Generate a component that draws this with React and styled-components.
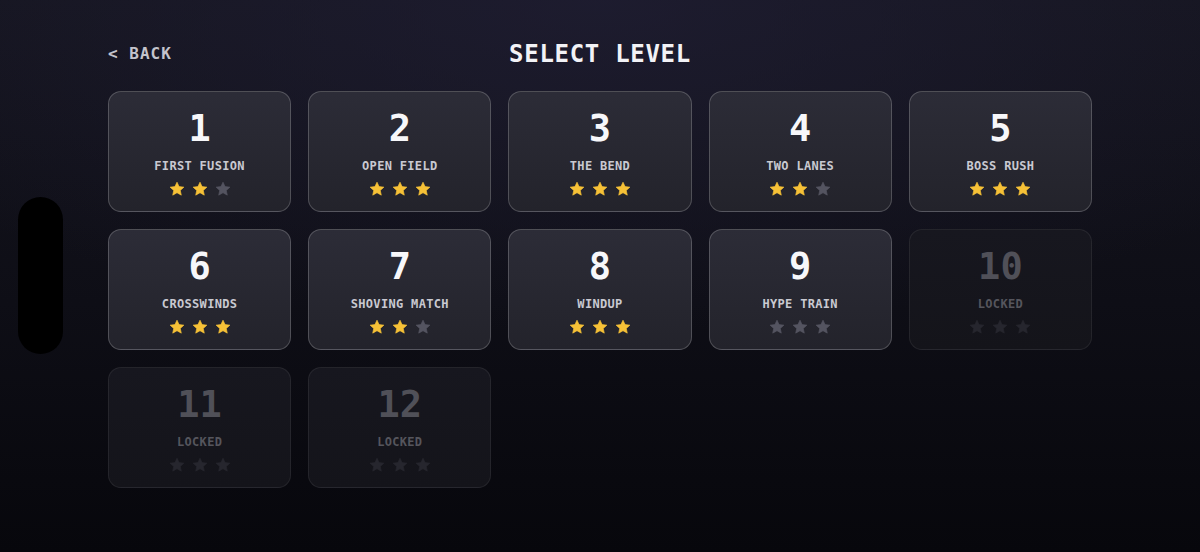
import React from "react";
import styled, { createGlobalStyle } from "styled-components";

const GlobalStyle = createGlobalStyle`
  html, body { margin: 0; padding: 0; }
  body {
    background: #0b0b12;
    font-family: "DejaVu Sans Mono", "Liberation Mono", monospace;
  }
  * { box-sizing: border-box; }
`;

const Screen = styled.div`
  position: relative;
  width: 1200px;
  height: 552px;
  overflow: hidden;
  background:
    radial-gradient(ellipse 70% 60% at 50% 0%, rgba(32, 30, 52, 0.75), rgba(32, 30, 52, 0) 100%),
    linear-gradient(to bottom, #15151f 0%, #0e0e16 55%, #07070c 100%);
  display: flex;
  justify-content: center;
`;

const Notch = styled.div`
  position: absolute;
  left: 18px;
  top: 197px;
  width: 45px;
  height: 157px;
  border-radius: 23px;
  background: #000;
`;

const Content = styled.div`
  width: 984px;
  padding-top: 36px;
  display: flex;
  flex-direction: column;
`;

const Header = styled.div`
  position: relative;
  height: 34px;
  display: flex;
  align-items: center;
  justify-content: center;
  margin-bottom: 21px;
`;

const BackButton = styled.button`
  position: absolute;
  left: 0;
  top: 50%;
  transform: translateY(-50%);
  background: none;
  border: none;
  padding: 0;
  color: #c4c4cc;
  font-family: "DejaVu Sans Mono", monospace;
  font-weight: bold;
  font-size: 16px;
  letter-spacing: 1px;
  cursor: pointer;
`;

const Title = styled.h1`
  margin: 0;
  padding-top: 2px;
  color: #f2f2f6;
  font-family: "DejaVu Sans Mono", monospace;
  font-weight: bold;
  font-size: 24px;
  letter-spacing: 0.7px;
`;

const Grid = styled.div`
  display: grid;
  grid-template-columns: repeat(5, 1fr);
  column-gap: 17px;
  row-gap: 17px;
`;

const Card = styled.div`
  height: 121px;
  border-radius: 13px;
  padding-top: 17px;
  display: flex;
  flex-direction: column;
  align-items: center;
  border: 1px solid ${(p) => (p.$locked ? "rgba(255,255,255,0.07)" : "rgba(255,255,255,0.2)")};
  background: ${(p) =>
    p.$locked
      ? "linear-gradient(to bottom, #17171f, #14141a)"
      : "linear-gradient(to bottom, #2c2c37, #23232b)"};
`;

const Number = styled.div`
  height: 40px;
  line-height: 40px;
  font-size: 37px;
  font-weight: bold;
  color: ${(p) => (p.$locked ? "#505058" : "#f7f7fa")};
`;

const Name = styled.div`
  margin-top: 9px;
  height: 16px;
  line-height: 16px;
  font-size: 12px;
  font-weight: bold;
  letter-spacing: 0.32px;
  color: ${(p) => (p.$locked ? "#55555d" : "#c9c9d1")};
`;

const Stars = styled.div`
  margin-top: 7px;
  height: 16px;
  display: flex;
  gap: 7px;
`;

const StarSvg = styled.svg`
  width: 16px;
  height: 16px;
  display: block;
`;

const starColor = (state) =>
  state === "on" ? "#f6c137" : state === "off" ? "#545460" : "#26262e";

const Star = ({ state }) => (
  <StarSvg viewBox="0 0 24 24">
    <path
      d="M12 1.8l3.1 6.6 7.2.8-5.4 4.9 1.5 7.1L12 17.6l-6.4 3.6 1.5-7.1-5.4-4.9 7.2-.8z"
      fill={starColor(state)}
      stroke={starColor(state)}
      strokeWidth="1"
      strokeLinejoin="round"
    />
  </StarSvg>
);

const levels = [
  { n: 1, name: "FIRST FUSION", stars: 2 },
  { n: 2, name: "OPEN FIELD", stars: 3 },
  { n: 3, name: "THE BEND", stars: 3 },
  { n: 4, name: "TWO LANES", stars: 2 },
  { n: 5, name: "BOSS RUSH", stars: 3 },
  { n: 6, name: "CROSSWINDS", stars: 3 },
  { n: 7, name: "SHOVING MATCH", stars: 2 },
  { n: 8, name: "WINDUP", stars: 3 },
  { n: 9, name: "HYPE TRAIN", stars: 0 },
  { n: 10, locked: true },
  { n: 11, locked: true },
  { n: 12, locked: true },
];

export default function App() {
  return (
    <>
      <GlobalStyle />
      <Screen>
        <Notch />
        <Content>
          <Header>
            <BackButton>&lt; BACK</BackButton>
            <Title>SELECT LEVEL</Title>
          </Header>
          <Grid>
            {levels.map((l) => (
              <Card key={l.n} $locked={l.locked}>
                <Number $locked={l.locked}>{l.n}</Number>
                <Name $locked={l.locked}>{l.locked ? "LOCKED" : l.name}</Name>
                <Stars>
                  {[0, 1, 2].map((i) => (
                    <Star
                      key={i}
                      state={l.locked ? "locked" : i < l.stars ? "on" : "off"}
                    />
                  ))}
                </Stars>
              </Card>
            ))}
          </Grid>
        </Content>
      </Screen>
    </>
  );
}
